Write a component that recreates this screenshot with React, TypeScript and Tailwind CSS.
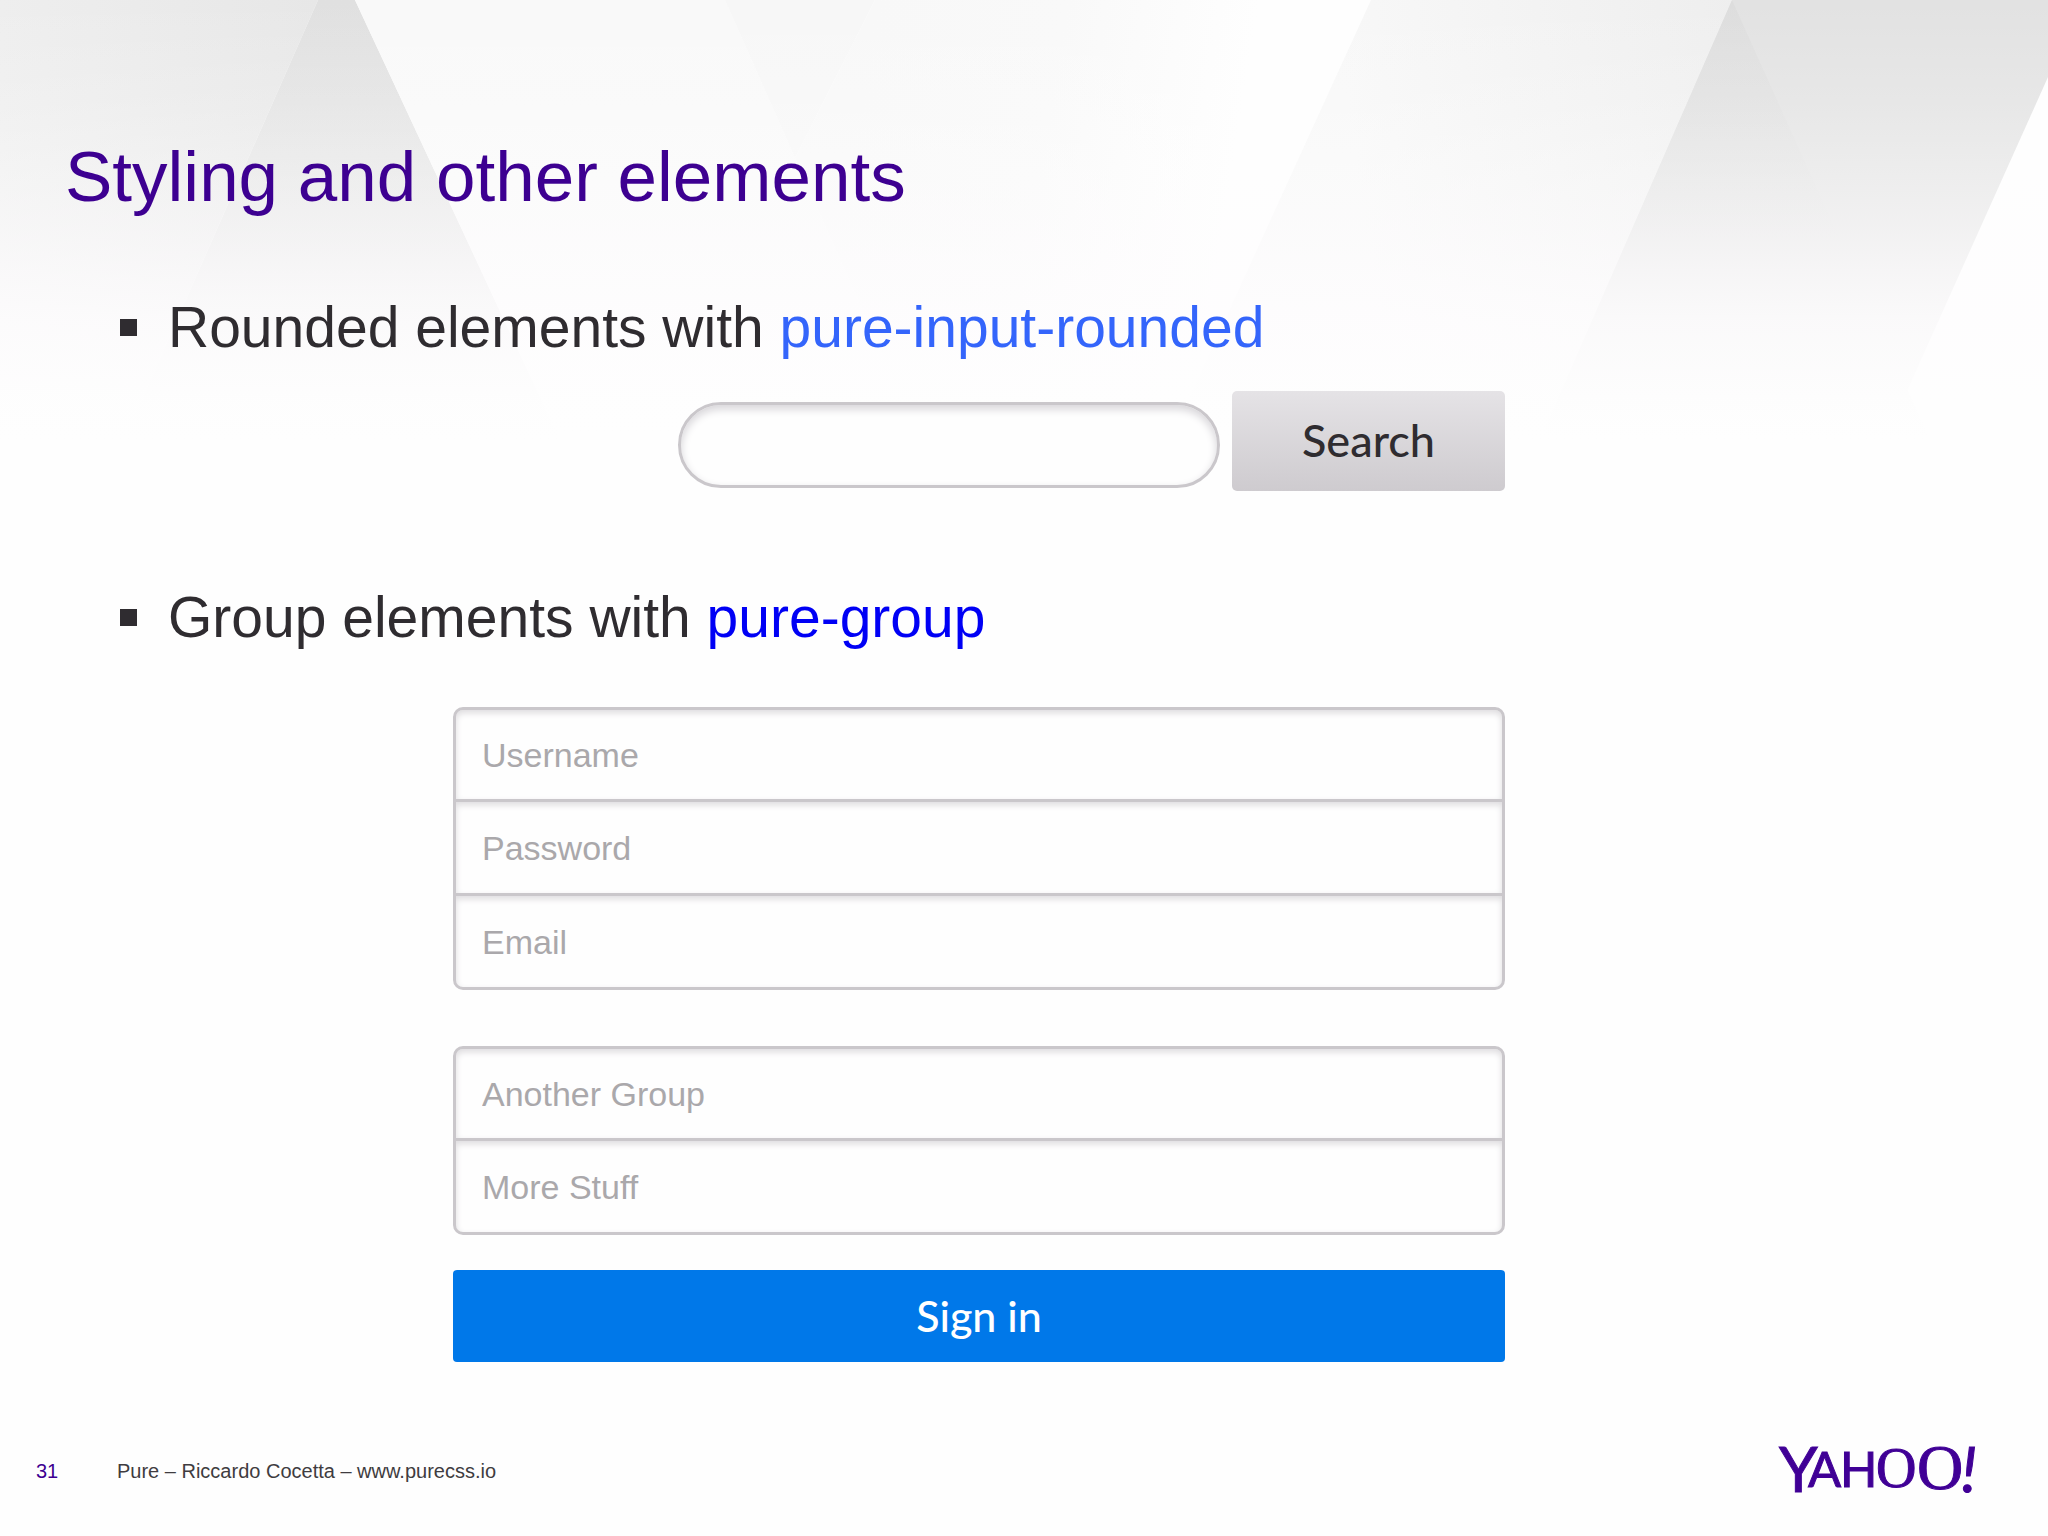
import { useState } from 'react'

const ACCOUNT_FIELDS = [
  { name: 'username', placeholder: 'Username', type: 'text' },
  { name: 'password', placeholder: 'Password', type: 'password' },
  { name: 'email', placeholder: 'Email', type: 'email' },
]

const EXTRA_FIELDS = [
  { name: 'another', placeholder: 'Another Group', type: 'text' },
  { name: 'more', placeholder: 'More Stuff', type: 'text' },
]

type Field = { name: string; placeholder: string; type: string }

function Backdrop() {
  return (
    <svg className="absolute inset-x-0 top-0 -z-10 h-[440px] w-full" viewBox="0 0 2048 440" preserveAspectRatio="none" aria-hidden="true">
      <defs>
        <linearGradient id="left" x1="0" y1="0" x2="1" y2="0">
          <stop offset="0" stopColor="#eeeeee" />
          <stop offset="1" stopColor="#e7e7e7" />
        </linearGradient>
        <linearGradient id="wedge" gradientUnits="userSpaceOnUse" x1="335" y1="0" x2="335" y2="440">
          <stop offset="0" stopColor="#e0e0e0" />
          <stop offset="0.6" stopColor="#e5e5e5" />
          <stop offset="1" stopColor="#e7e7e7" />
        </linearGradient>
        <linearGradient id="middle" gradientUnits="userSpaceOnUse" x1="875" y1="0" x2="1250" y2="60">
          <stop offset="0" stopColor="#f8f8f8" />
          <stop offset="0.5" stopColor="#f9f9f9" />
          <stop offset="1" stopColor="#fefefe" />
        </linearGradient>
        <linearGradient id="right" gradientUnits="userSpaceOnUse" x1="1340" y1="60" x2="1740" y2="0">
          <stop offset="0" stopColor="#f8f8f8" />
          <stop offset="1" stopColor="#eeeeee" />
        </linearGradient>
        <linearGradient id="shade" gradientUnits="userSpaceOnUse" x1="1732" y1="0" x2="1732" y2="240">
          <stop offset="0" stopColor="#dddddd" />
          <stop offset="1" stopColor="#e2e2e2" />
        </linearGradient>
        <linearGradient id="fade" x1="0" y1="0" x2="0" y2="1">
          <stop offset="0" stopColor="#fefefe" stopOpacity="0" />
          <stop offset="0.23" stopColor="#fefefe" stopOpacity="0.18" />
          <stop offset="0.39" stopColor="#fefefe" stopOpacity="0.38" />
          <stop offset="0.51" stopColor="#fefdfe" stopOpacity="0.54" />
          <stop offset="0.63" stopColor="#fefdfe" stopOpacity="0.73" />
          <stop offset="0.73" stopColor="#fefdfe" stopOpacity="0.87" />
          <stop offset="0.91" stopColor="#fefefe" stopOpacity="0.97" />
          <stop offset="1" stopColor="#fefefe" />
        </linearGradient>
      </defs>
      <path d="M0 0H318L124 440H0Z" fill="url(#left)" />
      <path d="M318 0H355L560 440H124Z" fill="url(#wedge)" />
      <path d="M355 0H725L920 440H560Z" fill="#f9f9f9" />
      <path d="M725 0H875L795 158Z" fill="#f7f7f7" />
      <path d="M875 0H1371L1170 440H920L795 158Z" fill="url(#middle)" />
      <path d="M1371 0H1732L1540 440H1170Z" fill="url(#right)" />
      <path d="M1732 0H2048V77L1885 440H1540Z" fill="#e2e2e2" />
      <path d="M1732 0L1930 440H1540Z" fill="url(#shade)" />
      <path d="M0 0H2048V440H0Z" fill="url(#fade)" />
    </svg>
  )
}

function FieldGroup({ fields }: { fields: Field[] }) {
  return (
    <fieldset className="flex flex-col">
      {fields.map(field => (
        <input
          key={field.name}
          name={field.name}
          type={field.type}
          placeholder={field.placeholder}
          aria-label={field.placeholder}
          className="-mt-[3px] h-[97px] w-full border-[3px] border-[#cac7cb] bg-[#fefefe] px-[26px] pt-0.5 text-[34px] text-[#2f2c30] shadow-[inset_0_3px_6px_#dddbde] outline-none placeholder:text-[#aaa8ab] first:mt-0 first:h-[95px] first:rounded-t-[10px] last:rounded-b-[10px]"
        />
      ))}
    </fieldset>
  )
}

function BulletLine({ children }: { children: React.ReactNode }) {
  return (
    <div className="flex items-center text-[57px] leading-[64px] text-[#2f2c30]">
      <span className="mr-[31px] size-[17px] shrink-0 bg-[#2f2c30]" />
      <p>{children}</p>
    </div>
  )
}

function YahooLogo() {
  return (
    <svg width="204" height="100" viewBox="0 0 204 100" fill="#400096" stroke="#400096" role="img" aria-label="Yahoo!">
      <text className="font-['Lato',sans-serif]">
        <tspan x="5" y="71" fontSize="62">Y</tspan>
        <tspan x="34" y="66" fontSize="49">A</tspan>
        <tspan x="66" y="66" fontSize="49">H</tspan>
        <tspan x="102" y="66" fontSize="56" className="font-['Liberation_Serif',serif]">O</tspan>
        <tspan x="143" y="68" fontSize="64" className="font-['Liberation_Serif',serif]">O</tspan>
        <tspan x="187" y="71" fontSize="63" fontStyle="italic">!</tspan>
      </text>
    </svg>
  )
}

export default function App() {
  const [query, setQuery] = useState('')

  return (
    <div className="relative isolate flex min-h-screen flex-col bg-[#fefefe] font-['Liberation_Sans',Arial,sans-serif]">
      <Backdrop />

      <main className="w-full max-w-[1505px] pt-[137px]">
        <h1 className="pl-[65px] text-[71px] leading-[80px] text-[#3d0091]">Styling and other elements</h1>

        <section className="mt-[78px] pl-[120px]">
          <BulletLine>
            Rounded elements with <span className="text-[#3465fb]">pure-input-rounded</span>
          </BulletLine>
          <form className="mt-8 flex items-center justify-end gap-3" onSubmit={e => e.preventDefault()}>
            <input
              type="text"
              aria-label="Search"
              value={query}
              onChange={e => setQuery(e.target.value)}
              className="mt-2 h-[86px] w-[542px] rounded-full border-[3px] border-[#cac7cb] bg-[#fefefe] px-9 text-[34px] shadow-[inset_0_4px_8px_#d6d4d8] outline-none"
            />
            <button type="submit" className="h-[100px] w-[273px] rounded-[5px] bg-linear-to-b from-[#e5e3e6] to-[#cecbcf] font-['Lato',sans-serif] text-[45px] font-medium text-[#2f2c30]">
              Search
            </button>
          </form>
        </section>

        <section className="mt-[94px] pl-[120px]">
          <BulletLine>
            Group elements with <span className="text-[#0000f5]">pure-group</span>
          </BulletLine>
          <form className="mt-[58px] ml-[333px] flex flex-col" onSubmit={e => e.preventDefault()}>
            <FieldGroup fields={ACCOUNT_FIELDS} />
            <div className="mt-14">
              <FieldGroup fields={EXTRA_FIELDS} />
            </div>
            <button type="submit" className="mt-[35px] h-[92px] rounded-[4px] bg-[#0078e9] font-['Lato',sans-serif] text-[43px] font-medium text-white">
              Sign in
            </button>
          </form>
        </section>
      </main>

      <footer className="mt-auto flex items-center pr-[70px] pb-[15px] pl-9 text-[20px] leading-6 text-[#3f3c40]">
        <span className="w-[81px] text-[#3d0091]">31</span>
        <p className="grow">Pure – Riccardo Cocetta – www.purecss.io</p>
        <YahooLogo />
      </footer>
    </div>
  )
}
